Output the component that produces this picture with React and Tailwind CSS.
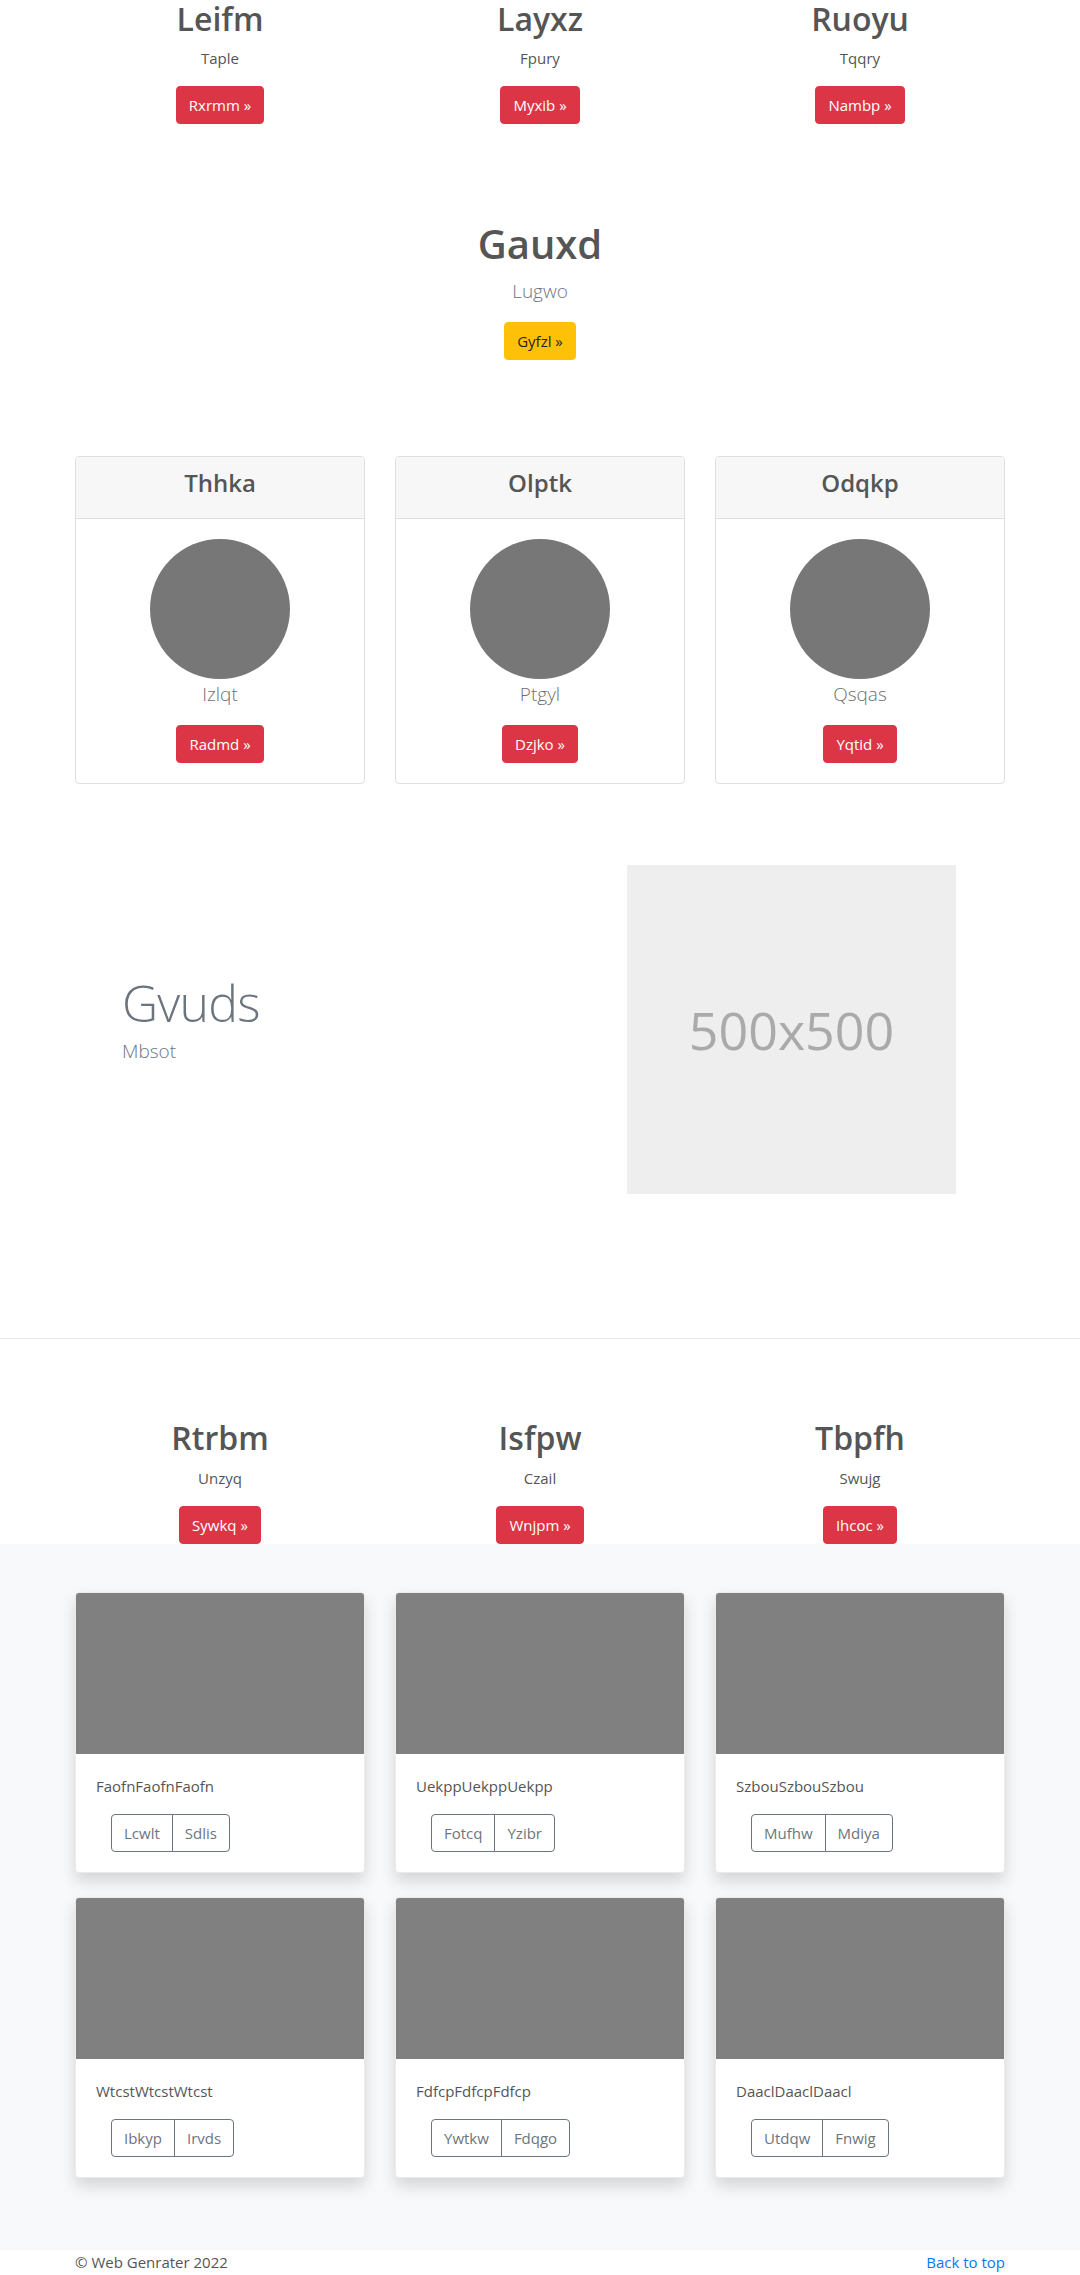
import React from 'react';

const topCols = [
  { title: 'Leifm', text: 'Taple', btn: 'Rxrmm' },
  { title: 'Layxz', text: 'Fpury', btn: 'Myxib' },
  { title: 'Ruoyu', text: 'Tqqry', btn: 'Nambp' },
];

const pricing = [
  { title: 'Thhka', text: 'Izlqt', btn: 'Radmd' },
  { title: 'Olptk', text: 'Ptgyl', btn: 'Dzjko' },
  { title: 'Odqkp', text: 'Qsqas', btn: 'Yqtid' },
];

const bottomCols = [
  { title: 'Rtrbm', text: 'Unzyq', btn: 'Sywkq' },
  { title: 'Isfpw', text: 'Czail', btn: 'Wnjpm' },
  { title: 'Tbpfh', text: 'Swujg', btn: 'Ihcoc' },
];

const albums = [
  { text: 'FaofnFaofnFaofn', btns: ['Lcwlt', 'Sdlis'] },
  { text: 'UekppUekppUekpp', btns: ['Fotcq', 'Yzibr'] },
  { text: 'SzbouSzbouSzbou', btns: ['Mufhw', 'Mdiya'] },
  { text: 'WtcstWtcstWtcst', btns: ['Ibkyp', 'Irvds'] },
  { text: 'FdfcpFdfcpFdfcp', btns: ['Ywtkw', 'Fdqgo'] },
  { text: 'DaaclDaaclDaacl', btns: ['Utdqw', 'Fnwig'] },
];

function RedButton({ label }) {
  return (
    <a className="inline-block bg-[#dc3545] text-white border border-[#dc3545] rounded px-3 py-[6px] text-[15px] leading-6">
      {label} &raquo;
    </a>
  );
}

function ColumnRow({ items }) {
  return (
    <div className="w-[960px] mx-auto px-[15px] grid grid-cols-3 gap-x-[30px]">
      {items.map(item => (
        <div key={item.title} className="text-center">
          <h2 className="text-[32px] font-semibold leading-[1.2] mb-2 text-[#555]">{item.title}</h2>
          <p className="text-[15px] leading-6 mb-4 text-[#555]">{item.text}</p>
          <RedButton label={item.btn} />
        </div>
      ))}
    </div>
  );
}

export default function App() {
  return (
    <div className="bg-white text-[#555] min-h-screen" style={{ fontFamily: '"Open Sans", "Noto Sans", sans-serif' }}>
      {/* three columns */}
      <section className="pb-12">
        <ColumnRow items={topCols} />
      </section>

      {/* centered hero */}
      <section className="py-12 text-center">
        <h1 className="text-[40px] font-semibold leading-[1.2] mb-2 text-[#555]">Gauxd</h1>
        <p className="text-[19px] font-light leading-[30px] mb-4 text-[#6c757d]">Lugwo</p>
        <a className="inline-block bg-[#ffc107] text-[#212529] border border-[#ffc107] rounded px-3 py-[6px] text-[15px] leading-6">
          Gyfzl &raquo;
        </a>
      </section>

      {/* pricing cards */}
      <section className="pt-12 pb-12">
        <div className="w-[960px] mx-auto px-[15px] grid grid-cols-3 gap-x-[30px]">
          {pricing.map(card => (
            <div key={card.title} className="bg-white border border-[#dfdfdf] rounded overflow-hidden">
              <div className="bg-[#f7f7f7] border-b border-[#dfdfdf] px-5 py-3 text-center">
                <h4 className="text-[24px] font-semibold leading-[1.2] mb-2 text-[#555]">{card.title}</h4>
              </div>
              <div className="p-5 text-center">
                <div className="w-[140px] h-[140px] rounded-full bg-[#777] mx-auto" />
                <p className="text-[19px] font-light leading-[30px] mb-4 text-[#6f6f6f]">{card.text}</p>
                <RedButton label={card.btn} />
              </div>
            </div>
          ))}
        </div>
      </section>

      {/* featurette */}
      <section className="pt-[33px] pb-16">
        <div className="w-[960px] mx-auto px-[15px] flex items-center">
          <div className="flex-1 pl-[47px]">
            <h2 className="text-[50px] font-light leading-none tracking-[-0.05rem] mb-2 text-[#6c757d]">Gvuds</h2>
            <p className="text-[19px] font-light leading-[30px] mb-4 text-[#6c757d]">Mbsot</p>
          </div>
          <div className="w-[329px] h-[329px] mr-[49px] bg-[#eeeeee] flex items-center justify-center">
            <span className="text-[52px] text-[#aaaaaa] leading-none">500x500</span>
          </div>
        </div>
      </section>

      <hr className="my-20 border-0 border-t border-[#e6e6e6]" />

      {/* second columns */}
      <section>
        <ColumnRow items={bottomCols} />
      </section>

      {/* album */}
      <section className="bg-[#f8f9fa] py-12">
        <div className="w-[960px] mx-auto px-[15px] grid grid-cols-3 gap-x-[30px]">
          {albums.map(card => (
            <div key={card.text} className="mb-6 bg-white border border-[#ebebeb] rounded overflow-hidden shadow-[0_8px_16px_rgba(0,0,0,0.15)]">
              <div className="h-[161px] bg-[#808080]" />
              <div className="p-5">
                <p className="text-[15px] leading-6 mb-4 text-[#555]">{card.text}</p>
                <div className="inline-flex ml-[15px]">
                  {card.btns.map((b, i) => (
                    <button
                      key={b}
                      className={
                        i === 0
                          ? 'border border-[#6c757d] text-[#6c757d] rounded-l px-3 py-[6px] text-[15px] leading-6'
                          : 'border border-[#6c757d] text-[#6c757d] rounded-r -ml-px px-3 py-[6px] text-[15px] leading-6'
                      }
                    >
                      {b}
                    </button>
                  ))}
                </div>
              </div>
            </div>
          ))}
        </div>
      </section>

      <footer className="pb-12">
        <div className="w-[960px] mx-auto px-[15px] flex justify-between text-[15px] leading-6">
          <p className="text-[#555]">&copy; Web Genrater 2022</p>
          <a className="text-[#007bff]">Back to top</a>
        </div>
      </footer>
    </div>
  );
}
